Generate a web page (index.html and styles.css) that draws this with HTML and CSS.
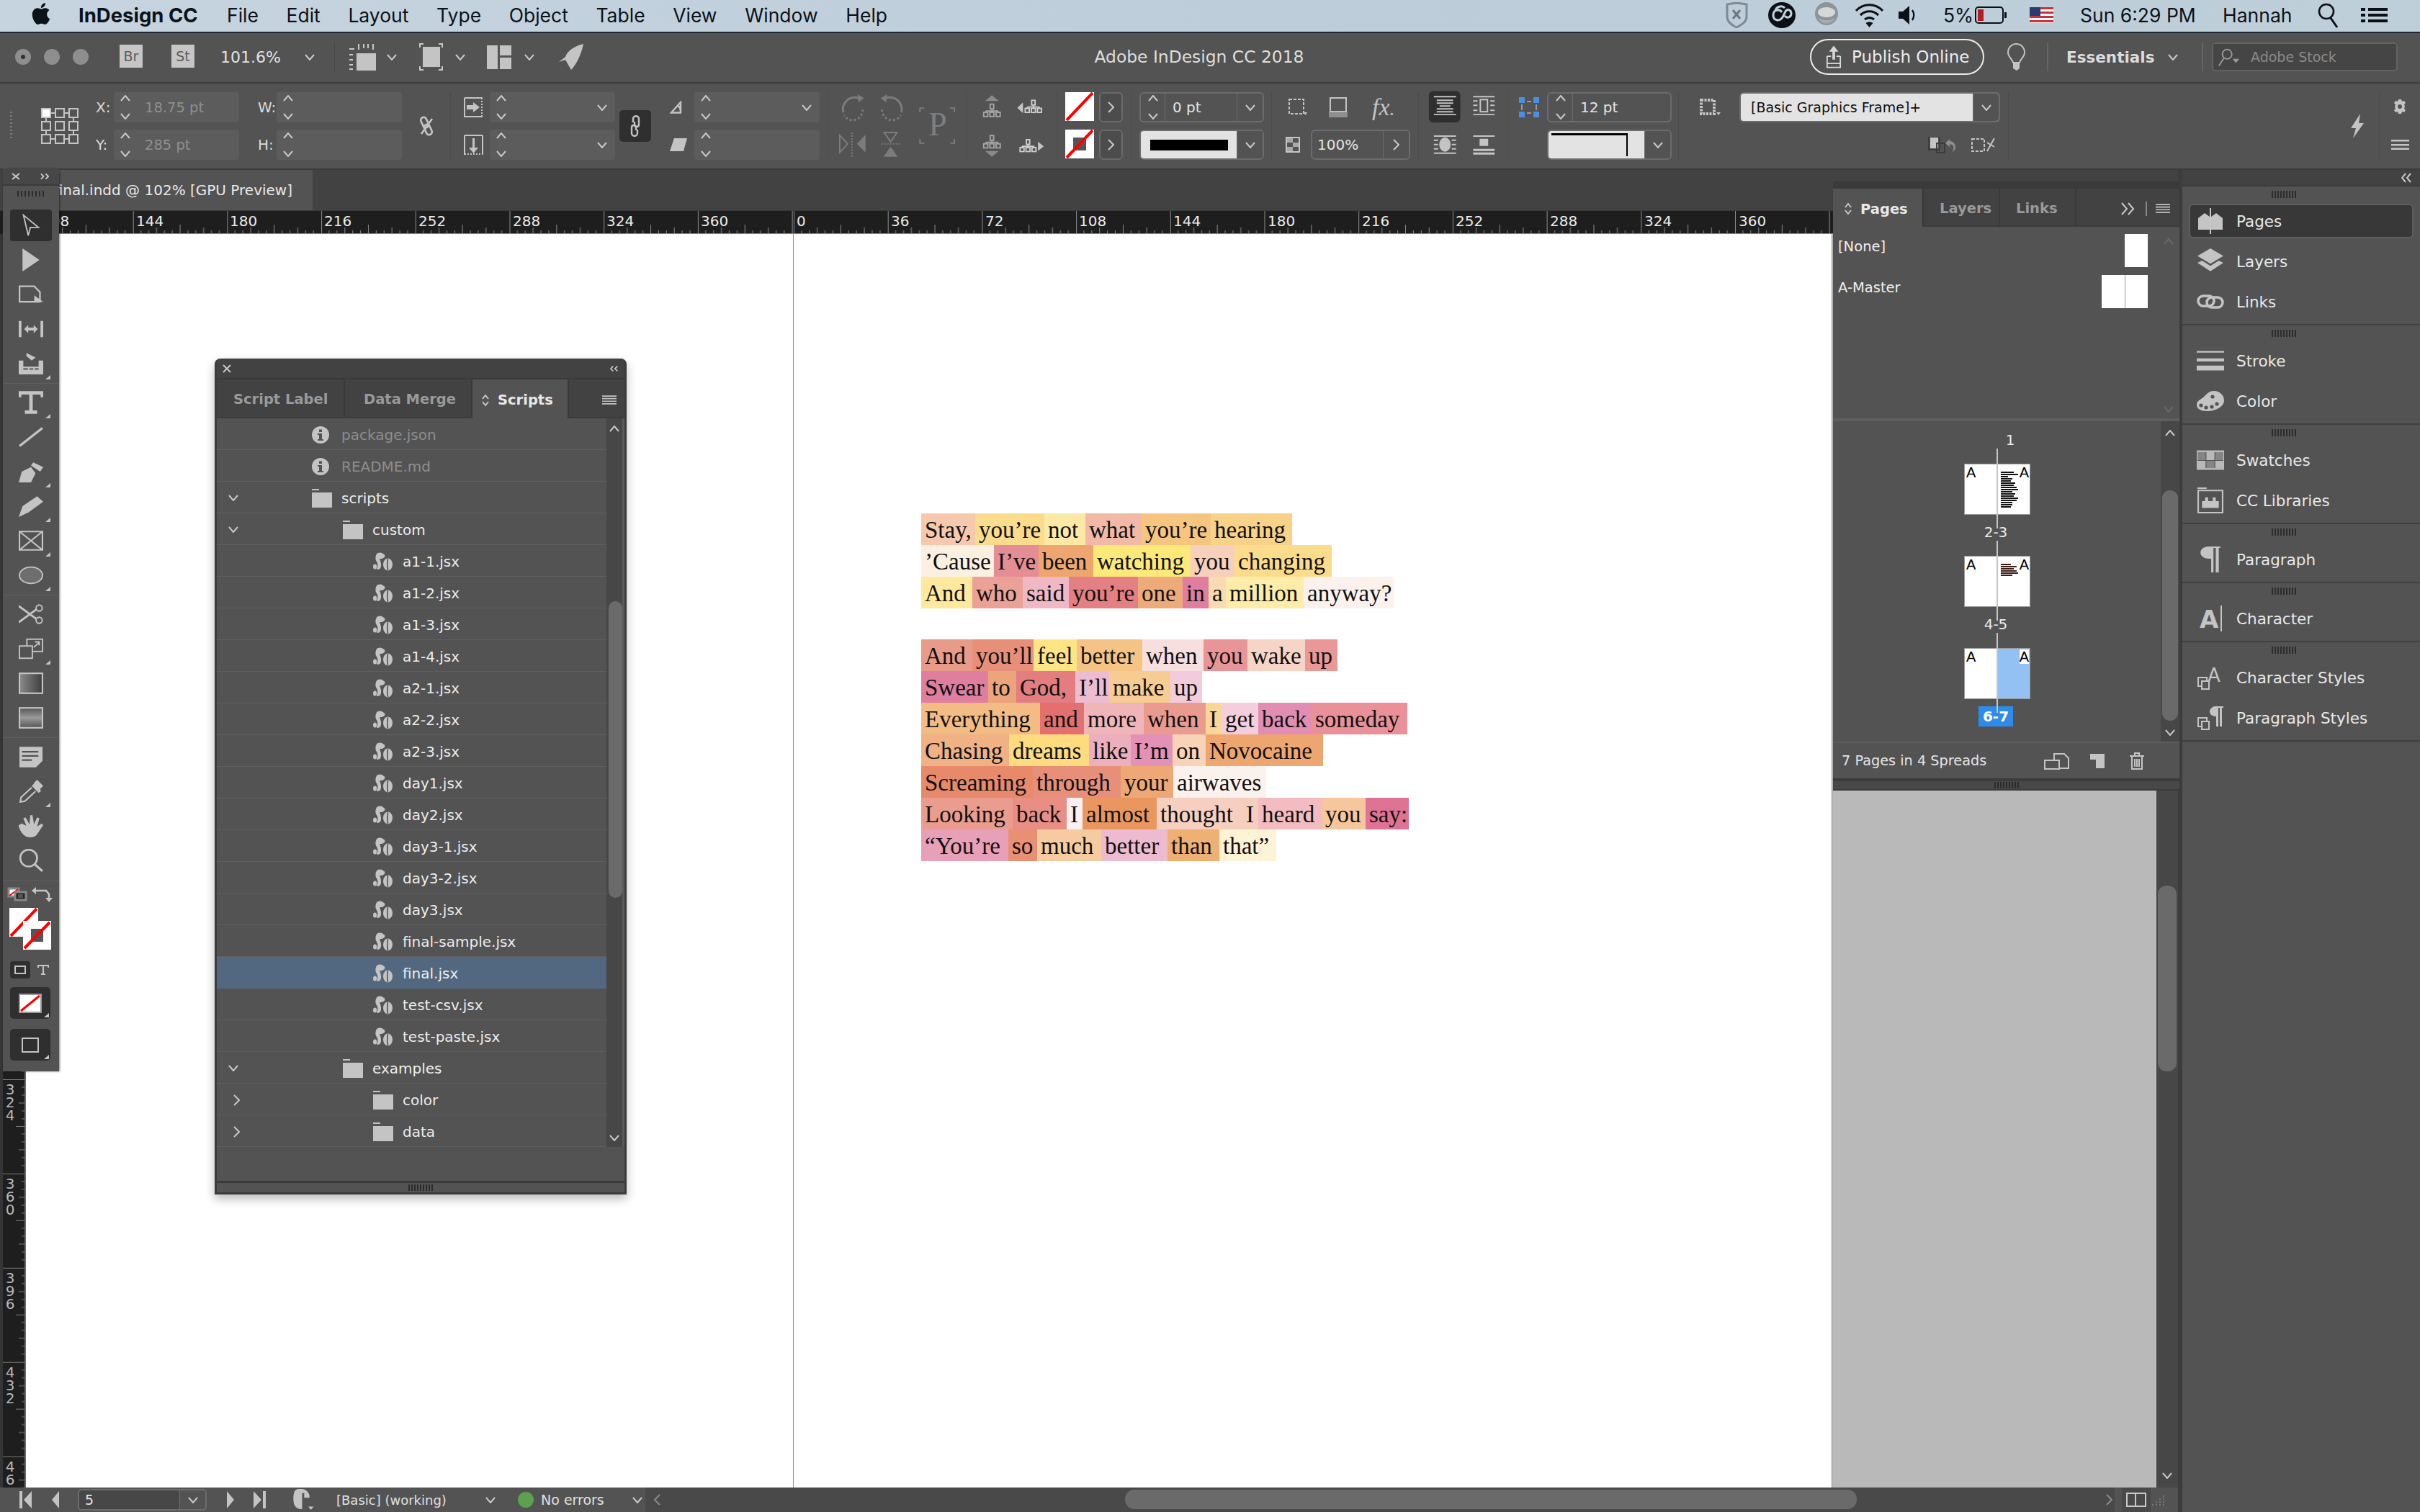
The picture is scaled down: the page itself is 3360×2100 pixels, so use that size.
FILE: index.html
```html
<!DOCTYPE html>
<html lang="en">
<head>
<meta charset="utf-8">
<title>Adobe InDesign CC 2018</title>
<link rel="stylesheet" href="styles.css">
</head>
<body>
<svg class="defs" aria-hidden="true">
  <defs>
    <symbol id="chev" viewBox="0 0 14 9"><polyline class="ln" points="1,1 7,8 13,1"/></symbol>
    <symbol id="chevr" viewBox="0 0 9 16"><polyline class="ln" points="1,1 8,8 1,15"/></symbol>
    <symbol id="spin" viewBox="0 0 14 34"><polyline class="ln" points="1,8 7,1 13,8"/><polyline class="ln" points="1,26 7,33 13,26"/></symbol>
    <symbol id="script" viewBox="0 0 28 26"><path class="ic" d="M6 1.500C9-.5 13 .5 14 2.500c3 .5 3 4 1 5-2 2-4 1-6 2 2 4 3 9 1 13-2 1-3 2-5 1 2-4 2-8-1-12-1-3-1-7 2-10.500z"/><ellipse class="ic" cx="2.600" cy="20" rx="2.600" ry="3.600"/><ellipse class="ic" cx="20.500" cy="17" rx="6.500" ry="8.500"/><path d="M20.500 9c-1 5-1 10 0 16" fill="none" stroke="#535353" stroke-width="1.600"/></symbol>
    <symbol id="folder" viewBox="0 0 28 26"><rect class="ic" x="0" y="0" width="10" height="2"/><rect class="ic" x="0" y="5" width="28" height="21"/></symbol>
    <symbol id="info" viewBox="0 0 24 24"><circle class="ic" cx="12" cy="12" r="12"/><rect class="cut" x="10" y="4.500" width="4" height="3.500"/><path class="cut" d="M8 10h6v8h2v2H8v-2h2v-6H8z"/></symbol>
    <symbol id="hamb" viewBox="0 0 24 15"><path class="ic" d="M0 0h24v2H0zM0 4.300h24v2H0zM0 8.600h24v2H0zM0 13h24v2H0z"/></symbol>
    <symbol id="nogo" viewBox="0 0 40 40"><rect fill="#fff" width="40" height="40"/><line x1="2" y1="39" x2="38" y2="1" stroke="#f00" stroke-width="4"/></symbol>
    <symbol id="tree" viewBox="0 0 28 20"><g fill="none" stroke="#a4a4a4" stroke-width="2"><rect x="11.500" y="1" width="5" height="7"/><path d="M14 8v3M5 11h18M5 11v2M14 11v2M23 11v2"/><rect x="2" y="13" width="6" height="6"/><rect x="11" y="13" width="6" height="6"/><rect x="20" y="13" width="6" height="6"/></g></symbol>
    <symbol id="treeb" viewBox="0 0 28 20"><g fill="none" stroke="#d0d0d0" stroke-width="2"><rect x="11.500" y="1" width="5" height="7"/><path d="M14 8v3M5 11h18M5 11v2M14 11v2M23 11v2"/><rect x="2" y="13" width="6" height="6"/><rect x="11" y="13" width="6" height="6"/><rect x="20" y="13" width="6" height="6"/></g></symbol>
  </defs>
</svg>

<header class="menubar">
  <svg class="apple" viewBox="0 0 24 24"><path d="M12.152 6.896c-.948 0-2.415-1.078-3.96-1.04-2.04.027-3.91 1.183-4.961 3.014-2.117 3.675-.546 9.103 1.519 12.09 1.013 1.454 2.208 3.09 3.792 3.039 1.52-.065 2.09-.987 3.935-.987 1.831 0 2.35.987 3.96.948 1.637-.026 2.676-1.48 3.676-2.948 1.156-1.688 1.636-3.325 1.662-3.415-.039-.013-3.182-1.221-3.22-4.857-.026-3.04 2.48-4.494 2.597-4.559-1.429-2.09-3.623-2.324-4.39-2.376-2-.156-3.675 1.09-4.61 1.09zM15.53 3.83c.843-1.012 1.4-2.427 1.245-3.83-1.207.052-2.662.805-3.532 1.818-.78.896-1.454 2.338-1.273 3.714 1.338.104 2.715-.688 3.559-1.701"/></svg>
  <strong class="app-name">InDesign CC</strong>
  <nav class="menus"><span>File</span><span>Edit</span><span>Layout</span><span>Type</span><span>Object</span><span>Table</span><span>View</span><span>Window</span><span>Help</span></nav>
  <div class="status">
    <svg class="s-shield" viewBox="0 0 31 36"><path d="M2 3l13-2 14 2v17c0 7-6 11-14 15C7 31 2 27 2 20z" fill="none" stroke="#7f8a94" stroke-width="3"/><path d="M10 11l10 12M20 11L10 23" stroke="#6d7780" stroke-width="3"/></svg>
    <svg class="s-cc" viewBox="0 0 38 36"><ellipse cx="19" cy="18" rx="19" ry="18" fill="#0c1016"/><path d="M19 14c-3-5-12-4-12 4s9 9 13 3l4-8c2-4 8-3 8 3 0 5-6 7-9 3" fill="none" stroke="#c0d0dc" stroke-width="3"/><path d="M10 12c1-6 9-8 13-4" fill="none" stroke="#c0d0dc" stroke-width="3"/></svg>
    <svg class="s-helmet" viewBox="0 0 37 36"><ellipse cx="18" cy="16" rx="16" ry="16" fill="#8e9498"/><ellipse cx="18" cy="14" rx="12" ry="7" fill="#d4d8da"/><path d="M7 22c4 10 18 10 23 0-6 4-16 4-23 0z" fill="#a8acae"/></svg>
    <svg class="s-wifi" viewBox="0 0 41 36"><path d="M2 12c10-11 27-11 37 0M8 18c7-7 18-7 25 0M14 24c4-3 9-3 13 0" fill="none" stroke="#0c1016" stroke-width="3.200"/><path d="M20.500 35l-5-6c3-2 7-2 10 0z" fill="#0c1016"/></svg>
    <svg class="s-speaker" viewBox="0 0 26 26"><path d="M0 8h6l9-8v26l-9-8H0z" fill="#0c1016"/><path d="M19 6c3 4 3 10 0 14" fill="none" stroke="#0c1016" stroke-width="2.400"/></svg>
    <span class="s-pct">5%</span>
    <svg class="s-batt" viewBox="0 0 45 24"><rect x="1" y="1" width="38" height="22" rx="4" fill="none" stroke="#0c1016" stroke-width="2"/><rect x="4" y="4" width="8" height="16" fill="#b41e1e"/><rect x="41" y="8" width="3" height="8" fill="#0c1016"/></svg>
    <svg class="s-flag" viewBox="0 0 33 22"><rect width="33" height="22" fill="#fff"/><path d="M0 0h33v3H0zM0 6h33v3H0zM0 12h33v3H0zM0 18h33v3H0z" fill="#c8333a"/><rect width="15" height="12" fill="#2c3a70"/></svg>
    <span class="s-clock">Sun 6:29 PM</span>
    <span class="s-user">Hannah</span>
    <svg class="s-search" viewBox="0 0 29 36"><circle cx="12" cy="13" r="10" fill="none" stroke="#0c1016" stroke-width="2.600"/><line x1="18" y1="22" x2="27" y2="35" stroke="#0c1016" stroke-width="3"/></svg>
    <svg class="s-list" viewBox="0 0 37 20"><path d="M0 0h6v4H0zM10 0h27v4H10zM0 8h6v4H0zM10 8h27v4H10zM0 16h6v4H0zM10 16h27v4H10z" fill="#0c1016"/></svg>
  </div>
</header>

<section class="titlebar">
  <div class="lights"><i class="light on"></i><i class="light"></i><i class="light"></i></div>
  <span class="badge">Br</span>
  <span class="badge">St</span>
  <span class="zoom-val">101.6%</span>
  <svg class="chev z-chev"><use href="#chev"/></svg>
  <i class="tsep"></i>
  <svg class="t-view" viewBox="0 0 38 38"><path class="ic" d="M11 14h27v24H11z"/><path class="ln" d="M1 8h7M1 16h5M1 23h5M1 30h5M1 36h5M14 1v8M21 1v6M27 1v6M34 1v8"/></svg>
  <svg class="chev c1"><use href="#chev"/></svg>
  <svg class="t-screen" viewBox="0 0 33 38"><path class="ic" d="M5 5h24v28H5z"/><path class="ln" d="M1 6V1h5M27 1h5v5M1 32v5h5M27 37h5v-5"/></svg>
  <svg class="chev c2"><use href="#chev"/></svg>
  <svg class="t-arrange" viewBox="0 0 34 33"><path class="ic" d="M0 0h15v33H0zM18 0h16v14H18zM18 17h16v16H18z"/></svg>
  <svg class="chev c3"><use href="#chev"/></svg>
  <svg class="t-rocket" viewBox="0 0 36 36"><path class="ic" d="M34 0C22 3 12 9 9 18l-9 7 9-3 8 14c6-6 14-20 17-36z"/></svg>
  <span class="app-title">Adobe InDesign CC 2018</span>
  <div class="title-right">
    <button class="publish"><svg viewBox="0 0 24 34"><path d="M12 0l7 9h-5v12h-4V9H5z" fill="#d8d8d8"/><path d="M2 16h6M16 16h6M2 16v17h20V16M2 27h20" fill="none" stroke="#d8d8d8" stroke-width="2"/></svg>Publish Online</button>
    <svg class="bulb" viewBox="0 0 25 38"><path d="M12.500 1C6 1 1 6 1 13c0 6 6 9 7 14h9c1-5 7-8 7-14 0-7-5-12-11.500-12z" fill="none" stroke="#c4c4c4" stroke-width="2"/><path class="ic" d="M8 27h9v8l-4 3-5-3z"/></svg>
    <i class="tsep b"></i>
    <strong class="workspace-name">Essentials</strong>
    <svg class="chev w-chev"><use href="#chev"/></svg>
    <i class="tsep c"></i>
    <div class="stock"><svg viewBox="0 0 34 26"><circle cx="14" cy="9" r="7" fill="none" stroke="#9a9a9a" stroke-width="2"/><path d="M9 15L2 26" stroke="#9a9a9a" stroke-width="2"/><path d="M22 16h10l-5 6z" fill="#9a9a9a"/></svg><span>Adobe Stock</span></div>
  </div>
</section>

<section class="controlbar">
  <div class="group g-ref">
    <i class="vgrip"></i>
    <svg class="refpoint" viewBox="0 0 52 50"><g fill="none" stroke="#c4c4c4" stroke-width="2"><rect x="1" y="1" width="12" height="12" fill="#fff"/><rect x="20" y="1" width="12" height="12"/><rect x="39" y="1" width="12" height="12"/><rect x="1" y="19" width="12" height="12"/><rect x="20" y="19" width="12" height="12"/><rect x="39" y="19" width="12" height="12"/><rect x="1" y="37" width="12" height="12"/><rect x="20" y="37" width="12" height="12"/><rect x="39" y="37" width="12" height="12"/><path d="M13 7h7M32 7h7M7 13v6M45 13v6M7 31v6M45 31v6M13 43h7M32 43h7"/></g></svg>
  </div>
  <div class="group g-xy">
    <label class="lab">X:</label>
    <div class="cf"><svg class="spin"><use href="#spin"/></svg><span class="dim">18.75 pt</span></div>
    <label class="lab w">W:</label>
    <div class="cf"><svg class="spin"><use href="#spin"/></svg></div>
    <label class="lab">Y:</label>
    <div class="cf"><svg class="spin"><use href="#spin"/></svg><span class="dim">285 pt</span></div>
    <label class="lab w">H:</label>
    <div class="cf"><svg class="spin"><use href="#spin"/></svg></div>
  </div>
  <div class="group g-link">
    <svg viewBox="0 0 26 28"><g fill="none" stroke="#c4c4c4" stroke-width="2.600"><g transform="rotate(-25 13 14)"><rect x="9" y="1" width="8" height="15" rx="4"/><rect x="9" y="12" width="8" height="15" rx="4"/></g><path d="M21 4L6 25"/></g></svg>
  </div>
  <div class="group g-skew">
    <svg class="mini box" viewBox="0 0 27 28"><path d="M1 1h25M1 1v27M1 27h25" fill="none" stroke="#c4c4c4" stroke-width="2"/><path d="M25 1v27" stroke="#c4c4c4" stroke-width="2" stroke-dasharray="2 2"/><path class="ic" d="M4 11h9V7l9 7-9 7v-4H4z"/></svg>
    <div class="cf"><svg class="spin"><use href="#spin"/></svg><svg class="chev push"><use href="#chev"/></svg></div>
    <div class="chain"><svg viewBox="0 0 14 30"><g fill="none" stroke="#c4c4c4" stroke-width="2.400"><path d="M4 10V5c0-5 8-5 8 0v8c0 4-6 4-6 0v-4"/><path d="M10 20v5c0 5-8 5-8 0v-8c0-4 6-4 6 0v4"/></g></svg></div>
    <svg class="mini small r1" viewBox="0 0 24 18"><path d="M2 16.500L15 2v14.500zM11 7c3 1 4 5 4 9" fill="none" stroke="#c4c4c4" stroke-width="2.400"/></svg>
    <div class="cf c5"><svg class="spin"><use href="#spin"/></svg><svg class="chev push"><use href="#chev"/></svg></div>
    <svg class="mini box r2" viewBox="0 0 27 28"><path d="M1 1h25M1 1v27M26 1v27" fill="none" stroke="#c4c4c4" stroke-width="2"/><path d="M1 27h25" stroke="#c4c4c4" stroke-width="2" stroke-dasharray="2 2"/><path class="ic" d="M12 5h3v13h5l-6.500 8L7 18h5z"/></svg>
    <div class="cf c7"><svg class="spin"><use href="#spin"/></svg><svg class="chev push"><use href="#chev"/></svg></div>
    <svg class="mini small r3" viewBox="0 0 24 18"><path class="ic" d="M6 0h18l-5 18H0z"/></svg>
    <div class="cf c9"><svg class="spin"><use href="#spin"/></svg></div>
  </div>
  <div class="group g-rot">
    <svg class="full" viewBox="0 0 193 94">
      <g fill="none" stroke="#7c7c7c" stroke-width="3"><path d="M48 24a14 14 0 0 1-26 8" stroke-dasharray="3 3"/><path d="M21 28c-3-13 8-24 22-20"/><path d="M75 24a14 14 0 0 0 26 8" stroke-dasharray="3 3"/><path d="M102 28c3-13-8-24-22-20"/></g>
      <path fill="#7c7c7c" d="M41 3l9 5-8 6zM82 3l-9 5 8 6z"/>
      <path d="M16 60v24l11-12z" fill="none" stroke="#7c7c7c" stroke-width="2"/>
      <path d="M52 59v25L40 72z" fill="#7c7c7c"/>
      <path d="M33 56v34M74 72h26" stroke="#7c7c7c" stroke-width="2" stroke-dasharray="2 2"/>
      <path d="M78 56h18l-9 13z" fill="none" stroke="#7c7c7c" stroke-width="2"/>
      <path d="M77 90h20l-10-14z" fill="#7c7c7c"/>
      <path d="M128 28v-6h6M170 22h6v6M128 65v6h6M170 71h6v-6" fill="none" stroke="#7c7c7c" stroke-width="2"/>
      <text x="140" y="60" class="p-glyph">P</text>
    </svg>
  </div>
  <div class="group g-sel">
    <svg class="full" viewBox="0 0 125 94">
      <path fill="#8a8a8a" d="M25 12h19l-9.500-8zM25 82h19l-9.500 8z"/>
      <use href="#tree" x="21" y="15" width="27" height="20"/>
      <use href="#tree" x="21" y="59" width="27" height="20"/>
      <use href="#treeb" x="78" y="10" width="29" height="19"/>
      <use href="#treeb" x="72" y="65" width="26" height="19"/>
      <path class="ic" d="M78 14v15l-8-7.500zM99 69v13l8-6.500z"/>
    </svg>
  </div>
  <div class="group g-swatch">
    <svg class="sw"><use href="#nogo"/></svg>
    <div class="arrow-btn"><svg><use href="#chevr"/></svg></div>
    <svg class="sw" viewBox="0 0 40 40"><rect fill="#fff" width="40" height="40"/><rect x="11" y="11" width="18" height="18" fill="#555"/><line x1="2" y1="39" x2="38" y2="1" stroke="#f00" stroke-width="4"/></svg>
    <div class="arrow-btn"><svg><use href="#chevr"/></svg></div>
  </div>
  <div class="group g-stroke">
    <div class="bf"><div class="spin-col"><svg class="spin"><use href="#spin"/></svg></div><span class="val">0 pt</span><div class="dd"><svg class="chev"><use href="#chev"/></svg></div></div>
    <div class="bf"><div class="line-sw"><i></i></div><div class="dd"><svg class="chev"><use href="#chev"/></svg></div></div>
  </div>
  <div class="group g-fx">
    <div class="fx-row">
      <svg class="fx-frame" viewBox="0 0 27 24"><path d="M2 1h20v20H2z" fill="none" stroke="#c4c4c4" stroke-width="2" stroke-dasharray="4 2"/><path class="ic" d="M22 19h5l-2.500 4z"/></svg>
      <svg class="fx-shadow" viewBox="0 0 26 28"><rect x="2" y="1" width="22" height="19" fill="#555" stroke="#c4c4c4" stroke-width="2"/><rect x="0" y="20" width="26" height="8" fill="#a8a8a8" opacity=".7"/></svg>
      <span class="fx-text">fx<small>.</small></span>
    </div>
    <div class="op-row">
      <svg class="op-ic" viewBox="0 0 20 22"><rect x="1" y="1" width="18" height="20" fill="none" stroke="#c4c4c4" stroke-width="2"/><path fill="#a8a8a8" d="M2 2h8v6H2zM10 8h8v6h-8zM2 14h8v6H2z"/></svg>
      <div class="bf op"><span class="val">100%</span><div class="dd"><svg class="chevr-s"><use href="#chevr"/></svg></div></div>
    </div>
  </div>
  <div class="group g-wrap">
    <svg class="full" viewBox="0 0 124 94">
      <rect x="14" y="-2" width="44" height="44" rx="6" fill="#2f2f2f"/>
      <path class="ic" d="M21 5h31v2H21zM21 30h31v2H21zM25 10h23v2H25zM25 14h23v2H25zM29 18h15v2H29zM25 22h23v2H25zM25 26h23v2H25z"/>
      <path class="ic" d="M76 5h30v2H76zM76 30h30v2H76zM76 11h6v2h-6zM100 11h6v2h-6zM76 17h6v2h-6zM100 17h6v2h-6zM76 24h6v2h-6zM100 24h6v2h-6z"/>
      <rect x="86" y="10" width="10" height="17" fill="none" stroke="#c4c4c4" stroke-width="2"/>
      <path class="ic" d="M21 60h31v2H21zM21 66h6v2h-6zM46 66h6v2h-6zM21 72h6v2h-6zM46 72h6v2h-6zM21 78h6v2h-6zM46 78h6v2h-6zM21 84h31v2H21z"/>
      <ellipse class="ic" cx="36.500" cy="73" rx="8" ry="10"/>
      <path class="ic" d="M76 60h30v2H76zM85 65h12v10H85zM76 79h30v3H76zM76 84h30v3H76z"/>
    </svg>
  </div>
  <div class="group g-gap">
    <svg class="gap-ic" viewBox="0 0 28 28"><g fill="#4a90e2"><rect width="8" height="8"/><rect x="20" width="8" height="8"/><rect y="20" width="8" height="8"/><rect x="20" y="20" width="8" height="8"/></g><path d="M4 10v8M24 10v8M11 6h6M11 22h6" fill="none" stroke="#9a9a9a" stroke-width="2"/></svg>
    <div class="bf"><div class="spin-col"><svg class="spin"><use href="#spin"/></svg></div><span class="val">12 pt</span></div>
    <i></i>
    <div class="bf"><div class="corner-sw"><i></i></div><div class="dd"><svg class="chev"><use href="#chev"/></svg></div></div>
  </div>
  <div class="group g-style">
    <svg class="mini" viewBox="0 0 30 24"><rect x="2" y="2" width="18" height="19" fill="none" stroke="#c4c4c4" stroke-width="4" stroke-dasharray="3 1.500"/><path class="ic" d="M23 19h6l-3 4z"/></svg>
    <div class="bf style-field"><span>[Basic Graphics Frame]+</span><div class="dd"><svg class="chev"><use href="#chev"/></svg></div></div>
    <i></i>
    <div class="style-mini">
      <svg viewBox="0 0 40 23"><rect x="3" y="1" width="11" height="15" fill="#c4c4c4"/><rect x="1" y="0" width="15" height="18" fill="none" stroke="#3c3c3c" stroke-width="2"/><rect x="12" y="9" width="11" height="13" fill="none" stroke="#3c3c3c" stroke-width="2"/><path d="M30 3v3c5 0 8 4 8 8s-2 6-5 7c2-2 3-5 2-8-1-2-3-3-5-2v3l-6-5z" fill="#8e8e8e"/></svg>
      <svg viewBox="0 0 34 20"><rect x="1" y="2" width="17" height="17" fill="none" stroke="#c4c4c4" stroke-width="2" stroke-dasharray="4 2"/><path d="M22 19L32 1M22 7l10 6" stroke="#c4c4c4" stroke-width="2"/></svg>
    </div>
  </div>
  <svg class="bolt" viewBox="0 0 20 34"><path class="ic" d="M14 0L1 20h7L4 34l15-21h-7z"/></svg>
  <div class="group g-end">
    <svg class="gear" viewBox="0 0 20 20"><path class="ic" d="M8 0h4l1 3 3-1 2 3-2 2 1 3-1 3 2 2-2 3-3-1-1 3H8l-1-3-3 1-2-3 2-2-1-3 1-3-2-2 2-3 3 1z"/><circle class="cut" cx="10" cy="10" r="3"/></svg>
    <svg class="endmenu" viewBox="0 0 25 14"><path class="ic" d="M0 0h25v2.500H0zM0 6h25v2.500H0zM0 11.500h25V14H0z"/></svg>
  </div>
</section>

<main class="workspace">
  <section class="doc">
    <div class="tabbar"><div class="doc-tab">final.indd @ 102% [GPU Preview]</div></div>
    <svg class="hruler" viewBox="0 0 3024 32" width="3024" height="32">
      <defs>
        <pattern id="tl" patternUnits="userSpaceOnUse" x="54" y="0" width="130.700" height="32"><path d="M.5 0v32M65.350 19v12M32.700 23v8M98 23v8M10.900 27v4M21.800 27v4M43.600 27v4M54.500 27v4M76.200 27v4M87.100 27v4M108.900 27v4M119.800 27v4" stroke="#8c8c8c" fill="none"/></pattern>
        <pattern id="tr" patternUnits="userSpaceOnUse" x="1102" y="0" width="130.700" height="32"><path d="M.5 0v32M65.350 19v12M32.700 23v8M98 23v8M10.900 27v4M21.800 27v4M43.600 27v4M54.500 27v4M76.200 27v4M87.100 27v4M108.900 27v4M119.800 27v4" stroke="#8c8c8c" fill="none"/></pattern>
      </defs>
      <rect x="36" width="1066" height="32" fill="url(#tl)"/>
      <rect x="1102" width="1500" height="32" fill="url(#tr)"/>
      <rect x="36" y="31" width="2566" height="1" fill="#8a8a8a"/>
      <g class="rtext">
        <text x="58" y="21">108</text><text x="189" y="21">144</text><text x="319" y="21">180</text><text x="450" y="21">216</text><text x="581" y="21">252</text><text x="712" y="21">288</text><text x="842" y="21">324</text><text x="973" y="21">360</text>
        <text x="1106" y="21">0</text><text x="1237" y="21">36</text><text x="1368" y="21">72</text><text x="1498" y="21">108</text><text x="1629" y="21">144</text><text x="1760" y="21">180</text><text x="1891" y="21">216</text><text x="2021" y="21">252</text><text x="2152" y="21">288</text><text x="2283" y="21">324</text><text x="2414" y="21">360</text>
      </g>
    </svg>
    <div class="stage">
      <svg class="vruler" viewBox="0 325 36 1741" width="36" height="1741">
        <defs><pattern id="tv" patternUnits="userSpaceOnUse" x="0" y="1499" width="36" height="130.900"><path d="M4 .5h30M22 65.500h12M26 33h8M26 98h8M30 11h4M30 22h4M30 44h4M30 55h4M30 76h4M30 87h4M30 109h4M30 120h4" stroke="#7c7c7c" fill="none"/></pattern></defs>
        <rect x="0" y="1488" width="36" height="578" fill="url(#tv)"/>
        <rect x="0" y="325" width="4" height="1741" fill="#353535"/>
        <rect x="34" y="325" width="2" height="1741" fill="#6a6a6a"/>
        <g class="rtext vt" text-anchor="middle">
          <text x="14" y="1520">3</text><text x="14" y="1538">2</text><text x="14" y="1556">4</text>
          <text x="14" y="1651">3</text><text x="14" y="1669">6</text><text x="14" y="1687">0</text>
          <text x="14" y="1782">3</text><text x="14" y="1800">9</text><text x="14" y="1818">6</text>
          <text x="14" y="1913">4</text><text x="14" y="1931">3</text><text x="14" y="1949">2</text>
          <text x="14" y="2044">4</text><text x="14" y="2062">6</text>
        </g>
      </svg>
      <div class="page-left"></div>
      <div class="page-right">
        <article class="lyrics">
          <div class="stanza">
            <p class="line"><span style="width:75px;background:#f6c9ae">Stay,</span><span style="width:96px;background:#fbdc8c">you’re</span><span style="width:57px;background:#fde9a6">not</span><span style="width:78px;background:#f1b9a6">what</span><span style="width:96px;background:#f6c680">you’re</span><span style="width:113px;background:#f8d289">hearing</span></p>
            <p class="line"><span style="width:101px;background:#fcf0e0">’Cause</span><span style="width:62px;background:#e58d94">I’ve</span><span style="width:76px;background:#eea671">been</span><span style="width:135px;background:#fde87a">watching</span><span style="width:61px;background:#f6cfbd">you</span><span style="width:135px;background:#fbdc8c">changing</span></p>
            <p class="line"><span style="width:71px;background:#fee99f">And</span><span style="width:70px;background:#eba195">who</span><span style="width:64px;background:#f0b7c4">said</span><span style="width:96px;background:#e47f83">you’re</span><span style="width:62px;background:#eeab7a">one</span><span style="width:36px;background:#df7e9f">in</span><span style="width:24px;background:#fadab0">a</span><span style="width:108px;background:#feeca9">million</span><span style="width:125px;background:#fbf2ee">anyway?</span></p>
          </div>
          <div class="stanza">
            <p class="line"><span style="width:71px;background:#e99b8a">And</span><span style="width:85px;background:#e78f78">you’ll</span><span style="width:60px;background:#fde586">feel</span><span style="width:91px;background:#f5c484">better</span><span style="width:85px;background:#f7dfe0">when</span><span style="width:61px;background:#e99497">you</span><span style="width:80px;background:#f6d5c6">wake</span><span style="width:45px;background:#e99797">up</span></p>
            <p class="line"><span style="width:93px;background:#df7e9f">Swear</span><span style="width:39px;background:#eba47b">to</span><span style="width:82px;background:#e37d7f">God,</span><span style="width:47px;background:#eebcd2">I’ll</span><span style="width:85px;background:#f7cc92">make</span><span style="width:44px;background:#f2ccdc">up</span></p>
            <p class="line"><span style="width:165px;background:#f3bc85">Everything</span><span style="width:61px;background:#e36f6f">and</span><span style="width:83px;background:#f0b5b8">more</span><span style="width:86px;background:#ea9b90">when</span><span style="width:22px;background:#fad796">I</span><span style="width:51px;background:#f4cedc">get</span><span style="width:74px;background:#e28eb3">back</span><span style="width:133px;background:#e99099">someday</span></p>
            <p class="line"><span style="width:122px;background:#f0b185">Chasing</span><span style="width:111px;background:#fddb7e">dreams</span><span style="width:58px;background:#ecafbd">like</span><span style="width:58px;background:#e391b7">I’m</span><span style="width:46px;background:#f8d3b7">on</span><span style="width:163px;background:#eea671">Novocaine</span></p>
            <p class="line"><span style="width:155px;background:#e78a6c">Screaming</span><span style="width:122px;background:#e78f78">through</span><span style="width:73px;background:#eea876">your</span><span style="width:129px;background:#fbf2ee">airwaves</span></p>
            <p class="line"><span style="width:127px;background:#ea9c8e">Looking</span><span style="width:75px;background:#e88e84">back</span><span style="width:22px;background:#fbf0f1">I</span><span style="width:103px;background:#e9975f">almost</span><span style="width:119px;background:#f6cfc1">thought</span><span style="width:22px;background:#f5cfbd">I</span><span style="width:88px;background:#f2bcc0">heard</span><span style="width:61px;background:#f6c79d">you</span><span style="width:60px;background:#df7394">say:</span></p>
            <p class="line"><span style="width:121px;background:#e8a0b8">“You’re</span><span style="width:40px;background:#e98f74">so</span><span style="width:89px;background:#f6cba0">much</span><span style="width:92px;background:#edbbcf">better</span><span style="width:72px;background:#efb074">than</span><span style="width:79px;background:#fef4d5">that”</span></p>
          </div>
        </article>
      </div>
      <div class="pasteboard"></div>
      <div class="vscroll"><i class="vthumb"></i><svg class="chev vs-chev"><use href="#chev"/></svg></div>
    </div>
    <footer class="statusbar">
      <svg class="sb-first" viewBox="0 0 17 24"><path class="ic" d="M0 0h4v24H0zM17 0v24L6 12z"/></svg>
      <svg class="sb-prev" viewBox="0 0 10 24"><path class="ic" d="M10 0v24L0 12z"/></svg>
      <div class="sb-field"><span>5</span><div class="dd"><svg class="chev"><use href="#chev"/></svg></div></div>
      <svg class="sb-next" viewBox="0 0 10 24"><path class="ic" d="M0 0v24l10-12z"/></svg>
      <svg class="sb-last" viewBox="0 0 17 24"><path class="ic" d="M0 0v24l11-12zM13 0h4v24h-4z"/></svg>
      <svg class="sb-prof" viewBox="0 0 34 32"><path class="ic" d="M12 0h6a12 12 0 0 1 10 13h-8V6h-3v24c-9 0-13-5-13-15S6 0 12 0z"/><path class="ic" d="M26 26h8l-4 5z"/></svg>
      <span class="sb-text prof">[Basic] (working)</span>
      <svg class="chev sb-c1"><use href="#chev"/></svg>
      <i class="ok-dot"></i>
      <span class="sb-text err">No errors</span>
      <svg class="chev sb-c2"><use href="#chev"/></svg>
      <div class="hscroll">
        <svg class="hs-left" viewBox="0 0 9 16"><polyline class="ln dimln" points="8,1 1,8 8,15"/></svg>
        <i class="hthumb"></i>
        <svg class="hs-right" viewBox="0 0 9 16"><polyline class="ln dimln" points="1,1 8,8 1,15"/></svg>
      </div>
      <div class="spread-btn"><i></i><i></i></div>
      <svg class="resize" viewBox="0 0 20 16"><path d="M0 15h2M5 15h2M10 15h2M15 15h2M5 11h2M10 11h2M15 11h2M10 7h2M15 7h2M15 3h2" stroke="#777" stroke-width="2"/></svg>
    </footer>
  </section>

  <aside class="dock">
    <div class="dock-head"><svg viewBox="0 0 14 14"><path class="ln" d="M6 1L1 7l5 6M13 1L8 7l5 6"/></svg></div>
    <div class="dock-group first">
      <i class="grip"></i>
      <div class="dock-item active"><svg viewBox="0 0 36 36"><path class="ic" d="M1 14l9-7 7 5v18H1zM35 14l-9-7-7 5v18h16z"/><path class="ln" d="M18 0v36"/></svg>Pages</div>
      <div class="dock-item"><svg viewBox="0 0 36 34"><path class="ic" d="M18 0l17 10-17 10L1 10z"/><path class="ic" d="M1 19l6-3 11 7 11-7 6 3-17 11z"/></svg>Layers</div>
      <div class="dock-item"><svg viewBox="0 0 38 20"><g fill="none" stroke="#c4c4c4" stroke-width="3.500"><rect x="2" y="2" width="22" height="14" rx="7"/><rect x="14" y="4" width="22" height="14" rx="7"/></g></svg>Links</div>
    </div>
    <div class="dock-group">
      <i class="grip"></i>
      <div class="dock-item"><svg viewBox="0 0 34 24"><path class="ic" d="M0 0h34v2H0zM0 9h34v4H0zM0 18h34v6H0z"/></svg>Stroke</div>
      <div class="dock-item"><svg viewBox="0 0 38 28"><path class="ic" d="M24 0c8 0 14 6 14 13 0 9-12 15-24 15C6 28 0 25 0 19c0-5 5-7 9-10 4-4 8-9 15-9z"/><circle class="cut" cx="6" cy="20" r="2.600"/><circle class="cut" cx="13" cy="23" r="2.600"/><circle class="cut" cx="21" cy="22" r="2.600"/><circle class="cut" cx="28" cy="18" r="2.600"/><circle class="cut" cx="22" cy="8" r="2.600"/></svg>Color</div>
    </div>
    <div class="dock-group">
      <i class="grip"></i>
      <div class="dock-item"><svg viewBox="0 0 34 22"><rect width="34" height="22" fill="none" stroke="#c4c4c4" stroke-width="2"/><path class="ic" d="M1 1h10v10H1zM23 1h10v10H23zM12 12h10v9H12z" opacity=".45"/><path class="ic" d="M12 1h10v10H12zM1 12h10v9H1zM23 12h10v9H23z" opacity=".9"/></svg>Swatches</div>
      <div class="dock-item"><svg viewBox="0 0 34 34"><path d="M1 4h32v29H1z" fill="none" stroke="#c4c4c4" stroke-width="2"/><path d="M0 1h12" stroke="#c4c4c4" stroke-width="2"/><path class="ic" d="M6 27V18h4v-5h4v5h6v-5h4v5h4v9z"/></svg>CC Libraries</div>
    </div>
    <div class="dock-group">
      <i class="grip"></i>
      <div class="dock-item"><svg viewBox="0 0 26 34"><path class="ic" d="M12 0h14v2h-2v32h-4V2h-3v32h-3V16h-2C5 16 0 13 0 8s5-8 12-8z"/></svg>Paragraph</div>
    </div>
    <div class="dock-group">
      <i class="grip"></i>
      <div class="dock-item"><svg class="tall" viewBox="0 -6 38 48"><text x="4" y="31" class="dock-a">A</text><rect class="ic" x="33" y="0" width="2" height="36"/></svg>Character</div>
    </div>
    <div class="dock-group">
      <i class="grip"></i>
      <div class="dock-item"><svg viewBox="0 0 36 36"><text x="14" y="24" class="dock-a sm">A</text><g fill="none" stroke="#c4c4c4" stroke-width="2"><rect x="1" y="18" width="12" height="12"/><rect x="6" y="23" width="10" height="11" fill="#535353"/></g></svg>Character Styles</div>
      <div class="dock-item"><svg viewBox="0 0 36 36"><path class="ic" d="M24 2h12v2h-2v26h-3V4h-2v26h-3V16c-6 0-9-3-9-7s5-7 7-7z"/><g fill="none" stroke="#c4c4c4" stroke-width="2"><rect x="1" y="18" width="12" height="12"/><rect x="6" y="23" width="10" height="11" fill="#535353"/></g></svg>Paragraph Styles</div>
    </div>
  </aside>
</main>

<!-- floating tools panel -->
<aside class="tools">
  <div class="tools-head"><svg viewBox="0 0 12 10"><path class="ln" d="M1 1l10 8M11 1L1 9"/></svg><svg viewBox="0 0 13 10"><path class="ln" d="M1 1l4 4-4 4M8 1l4 4-4 4"/></svg></div>
  <i class="tools-grip"></i>
  <div class="tool-group first">
    <div class="tool active"><svg viewBox="0 0 26 34"><path d="M2 2l22 18H12l-3 12z" fill="none" stroke="#c4c4c4" stroke-width="2"/></svg></div>
    <div class="tool"><svg viewBox="0 0 26 30"><path class="ic" d="M2 0l22 15L2 30z"/></svg></div>
    <div class="tool"><svg viewBox="0 0 30 26"><path d="M1 3h18l7 7v12H1z" fill="none" stroke="#c4c4c4" stroke-width="2"/><path class="ic" d="M19 14l11 8H19z"/></svg></div>
    <div class="tool"><svg viewBox="0 0 36 24"><path class="ic" d="M0 0h4v24H0zM32 0h4v24h-4zM8 12l6-6v4h8V6l6 6-6 6v-4h-8v4z"/></svg></div>
    <div class="tool more"><svg viewBox="0 0 32 28"><path class="ic" d="M0 10h6v8h20v-8h6v18H0zM10 0l12 6-5 4-7-6z"/><path class="cut" d="M6 20h6v2H6zM14 20h5v2h-5zM21 20h5v2h-5z"/></svg></div>
  </div>
  <div class="tool-group">
    <div class="tool more"><svg viewBox="0 0 28 26"><path class="ic" d="M0 0h28v7h-3V4H16v18h5v4H7v-4h5V4H3v3H0z"/></svg></div>
    <div class="tool"><svg viewBox="0 0 30 24"><path d="M1 23L29 1" stroke="#c4c4c4" stroke-width="3"/></svg></div>
    <div class="tool more"><svg viewBox="0 0 32 28"><path class="ic" d="M0 28l4-14 12-6 6 8-6 12zM19 2l13 6-4 6-12-8z"/></svg></div>
    <div class="tool more"><svg viewBox="0 0 32 28"><path class="ic" d="M0 28l5-14L24 1l8 7-19 14z"/></svg></div>
    <div class="tool more"><svg viewBox="0 0 32 26"><path d="M1 1h30v24H1zM1 1l30 24M31 1L1 25" fill="none" stroke="#c4c4c4" stroke-width="2"/></svg></div>
    <div class="tool more"><svg viewBox="0 0 36 28"><ellipse cx="18" cy="14" rx="17" ry="12" fill="#6e6e6e" stroke="#c4c4c4" stroke-width="2"/></svg></div>
  </div>
  <div class="tool-group">
    <div class="tool"><svg viewBox="0 0 36 30"><path d="M0 3l26 19M0 27L26 8" stroke="#c4c4c4" stroke-width="3"/><circle cx="30" cy="6" r="4.500" fill="none" stroke="#c4c4c4" stroke-width="2"/><circle cx="30" cy="24" r="4.500" fill="none" stroke="#c4c4c4" stroke-width="2"/></svg></div>
    <div class="tool more"><svg viewBox="0 0 36 30"><rect x="12" y="1" width="23" height="18" fill="none" stroke="#c4c4c4" stroke-width="2"/><rect x="1" y="11" width="19" height="18" fill="#535353" stroke="#c4c4c4" stroke-width="2"/><path d="M22 13l8-7M24 5h6v5" fill="none" stroke="#c4c4c4" stroke-width="2"/></svg></div>
    <div class="tool"><svg viewBox="0 0 32 28"><defs><linearGradient id="gr1"><stop offset="0" stop-color="#8a8a8a"/><stop offset="1" stop-color="#3e3e3e"/></linearGradient></defs><rect x="1" y="1" width="30" height="26" fill="url(#gr1)" stroke="#c4c4c4" stroke-width="2"/></svg></div>
    <div class="tool"><svg viewBox="0 0 32 28"><defs><linearGradient id="gr2" x2="0" y2="1"><stop offset="0" stop-color="#555"/><stop offset=".5" stop-color="#9a9a9a"/><stop offset="1" stop-color="#555"/></linearGradient></defs><rect x="1" y="1" width="30" height="26" fill="url(#gr2)" stroke="#c4c4c4" stroke-width="2"/></svg></div>
  </div>
  <div class="tool-group">
    <div class="tool"><svg viewBox="0 0 28 28"><path class="ic" d="M0 2h28v17l-8 8H0z"/><path class="cut" d="M3 7h20v2H3zM3 12h20v2H3zM3 17h12v2H3z"/></svg></div>
    <div class="tool more"><svg viewBox="0 0 32 30"><path class="ic" d="M20 4l4-4 8 8-4 4 1 3-3 2-9-9 3-3z"/><path d="M17 10L3 23l-1 6 6-1 14-13" fill="none" stroke="#c4c4c4" stroke-width="2"/></svg></div>
    <div class="tool"><svg viewBox="0 0 32 30"><path class="ic" d="M0 14l4-2 6 3L6 5l3-1 5 9 1-12h3l2 12 4-9 3 1-3 11 6-4 2 2-8 12c-2 3-5 4-9 4-7 0-12-5-15-14z"/></svg></div>
    <div class="tool"><svg viewBox="0 0 32 30"><circle cx="13" cy="12" r="11" fill="none" stroke="#c4c4c4" stroke-width="2.500"/><path d="M21 20l10 9" stroke="#c4c4c4" stroke-width="3"/></svg></div>
  </div>
  <div class="swatch-block">
    <svg class="sw-svg" viewBox="0 0 77 112" width="77" height="112">
      <rect x="12" y="11" width="14" height="11" fill="#fff" stroke="#888" stroke-width="3"/><line x1="13" y1="21" x2="25" y2="12" stroke="#f00" stroke-width="2"/>
      <rect x="21" y="16" width="15" height="11" fill="#222" stroke="#888" stroke-width="3"/><rect x="25" y="19" width="7" height="5" fill="#555"/>
      <path d="M50 14h14l4 5v6" fill="none" stroke="#c4c4c4" stroke-width="2.500"/><path class="ic" d="M50 9v10l-6-5zM63 24h10l-5 6z"/>
      <svg x="13" y="38" width="40" height="40" viewBox="0 0 40 40"><use href="#nogo"/></svg>
      <rect x="32" y="56" width="39" height="40" fill="#fff"/><rect x="43" y="67" width="17" height="18" fill="#555"/><line x1="34" y1="94" x2="69" y2="58" stroke="#f00" stroke-width="4"/>
    </svg>
    <div class="fmt-row"><div class="fmt-btn"><i></i></div><svg viewBox="0 0 16 14"><path class="ic" d="M0 0h16v4h-2V2H9v10h2v2H5v-2h2V2H2v2H0z"/></svg></div>
    <div class="apply-btn"><svg viewBox="0 0 32 27"><rect x="1" y="1" width="30" height="25" fill="#fff" stroke="#999" stroke-width="2"/><line x1="3" y1="24" x2="29" y2="3" stroke="#f00" stroke-width="3"/></svg></div>
    <div class="apply-btn"><svg viewBox="0 0 32 27"><rect x="5" y="4" width="22" height="19" fill="none" stroke="#c4c4c4" stroke-width="2"/></svg></div>
  </div>
</aside>

<!-- floating scripts panel -->
<section class="scripts">
  <div class="panel-strip"><svg viewBox="0 0 12 12"><path class="ln" d="M1 1l10 10M11 1L1 11"/></svg><svg viewBox="0 0 14 10"><path class="ln" d="M5 1L1 5l4 4M12 1L8 5l4 4"/></svg></div>
  <div class="panel-tabs">
    <div class="ptab t1">Script Label</div>
    <div class="ptab t2">Data Merge</div>
    <div class="ptab t3 on"><svg viewBox="0 0 10 18"><path class="ln" d="M1 7l4-5 4 5M1 11l4 5 4-5"/></svg>Scripts</div>
    <svg class="phamb"><use href="#hamb"/></svg>
  </div>
  <div class="listwrap">
    <ul class="list">
      <li class="dimrow"><span class="twist"></span><svg class="ico inf"><use href="#info"/></svg>package.json</li>
      <li class="dimrow"><span class="twist"></span><svg class="ico inf"><use href="#info"/></svg>README.md</li>
      <li><span class="twist"><svg class="chev"><use href="#chev"/></svg></span><svg class="ico"><use href="#folder"/></svg>scripts</li>
      <li class="l2"><span class="twist"><svg class="chev"><use href="#chev"/></svg></span><svg class="ico"><use href="#folder"/></svg>custom</li>
      <li class="l3"><span class="twist"></span><svg class="ico"><use href="#script"/></svg>a1-1.jsx</li>
      <li class="l3"><span class="twist"></span><svg class="ico"><use href="#script"/></svg>a1-2.jsx</li>
      <li class="l3"><span class="twist"></span><svg class="ico"><use href="#script"/></svg>a1-3.jsx</li>
      <li class="l3"><span class="twist"></span><svg class="ico"><use href="#script"/></svg>a1-4.jsx</li>
      <li class="l3"><span class="twist"></span><svg class="ico"><use href="#script"/></svg>a2-1.jsx</li>
      <li class="l3"><span class="twist"></span><svg class="ico"><use href="#script"/></svg>a2-2.jsx</li>
      <li class="l3"><span class="twist"></span><svg class="ico"><use href="#script"/></svg>a2-3.jsx</li>
      <li class="l3"><span class="twist"></span><svg class="ico"><use href="#script"/></svg>day1.jsx</li>
      <li class="l3"><span class="twist"></span><svg class="ico"><use href="#script"/></svg>day2.jsx</li>
      <li class="l3"><span class="twist"></span><svg class="ico"><use href="#script"/></svg>day3-1.jsx</li>
      <li class="l3"><span class="twist"></span><svg class="ico"><use href="#script"/></svg>day3-2.jsx</li>
      <li class="l3"><span class="twist"></span><svg class="ico"><use href="#script"/></svg>day3.jsx</li>
      <li class="l3"><span class="twist"></span><svg class="ico"><use href="#script"/></svg>final-sample.jsx</li>
      <li class="l3 sel"><span class="twist"></span><svg class="ico"><use href="#script"/></svg>final.jsx</li>
      <li class="l3"><span class="twist"></span><svg class="ico"><use href="#script"/></svg>test-csv.jsx</li>
      <li class="l3"><span class="twist"></span><svg class="ico"><use href="#script"/></svg>test-paste.jsx</li>
      <li class="l2"><span class="twist"><svg class="chev"><use href="#chev"/></svg></span><svg class="ico"><use href="#folder"/></svg>examples</li>
      <li class="l3"><span class="twist"><svg class="chev-r"><use href="#chevr"/></svg></span><svg class="ico"><use href="#folder"/></svg>color</li>
      <li class="l3"><span class="twist"><svg class="chev-r"><use href="#chevr"/></svg></span><svg class="ico"><use href="#folder"/></svg>data</li>
    </ul>
    <div class="lscroll"><svg class="chev up"><use href="#chev"/></svg><i class="lthumb"></i><svg class="chev dn"><use href="#chev"/></svg></div>
  </div>
  <div class="panel-foot"><i class="grip"></i></div>
</section>

<!-- floating pages panel -->
<section class="pages">
  <div class="pages-tabs">
    <div class="ptab p1 on"><svg viewBox="0 0 10 18"><path class="ln" d="M1 7l4-5 4 5M1 11l4 5 4-5"/></svg>Pages</div>
    <div class="ptab p2">Layers</div>
    <div class="ptab p3">Links</div>
    <div class="pg-tools"><svg class="more2" viewBox="0 0 20 18"><path class="ln" d="M1 1l7 8-7 8M10 1l7 8-7 8"/></svg><i></i><svg class="phamb"><use href="#hamb"/></svg></div>
  </div>
  <div class="masters">
    <div class="master"><span>[None]</span><i class="mpage"></i></div>
    <div class="master"><span>A-Master</span><i class="mpage"></i><i class="mpage"></i></div>
    <svg class="chev m-up"><use href="#chev"/></svg>
    <svg class="chev m-dn"><use href="#chev"/></svg>
  </div>
  <div class="pages-body">
    <div class="spreads">
      <div class="pg-num one">1</div>
      <div class="spread">
        <div class="sheet"><b>A</b></div>
        <div class="sheet right"><b>A</b><svg viewBox="0 0 26 50"><path d="M0 1h18M0 4h24M0 7h10M0 10h16M0 13h14M0 16h20M0 19h18M0 22h22M0 25h24M0 28h16M0 31h20M0 34h18M0 37h24M0 40h22M0 43h16M0 46h16M0 49h14" stroke="#111" stroke-width="2"/></svg></div>
      </div>
      <div class="pg-num">2-3</div>
      <div class="spread">
        <div class="sheet"><b>A</b></div>
        <div class="sheet right"><b>A</b><svg viewBox="0 0 26 50"><path d="M0 1h14M0 4h22M0 7h18M0 10h22M0 13h24M0 16h16" stroke="#3a1c14" stroke-width="2"/></svg></div>
      </div>
      <div class="pg-num">4-5</div>
      <div class="spread">
        <div class="sheet"><b>A</b></div>
        <div class="sheet right hl"><b>A</b></div>
      </div>
      <div class="pg-num"><span>6-7</span></div>
    </div>
    <div class="pscroll"><svg class="chev up"><use href="#chev"/></svg><i class="pthumb"></i><svg class="chev dn"><use href="#chev"/></svg></div>
  </div>
  <div class="pages-foot">
    <span>7 Pages in 4 Spreads</span>
    <svg class="pf1" viewBox="0 0 37 26"><path d="M1 12h20v12H1zM14 12V3h14l6 6v14H22" fill="none" stroke="#c4c4c4" stroke-width="2"/></svg>
    <svg class="pf2" viewBox="0 0 20 20"><path class="ic" d="M0 0h20v20H8V8H0z"/></svg>
    <svg class="pf3" viewBox="0 0 20 24"><path d="M0 5h20M7 4V1h6v3M3 5v18h14V5M7 9v11M10 9v11M13 9v11" fill="none" stroke="#c4c4c4" stroke-width="2"/></svg>
  </div>
  <div class="panel-foot short"><i class="grip"></i></div>
</section>
</body>
</html>
```
FILE: styles.css
```css
* { box-sizing: border-box; }
html, body { margin: 0; padding: 0; }
body {
  width: 3360px; height: 2100px; overflow: hidden; position: relative;
  display: flex; flex-direction: column;
  background: #535353; color: #e4e4e4;
  font-family: "DejaVu Sans", sans-serif; font-size: 19px;
}
svg { display: block; flex: none; }
i { display: block; flex: none; }
p, ul { margin: 0; padding: 0; list-style: none; }
button { font: inherit; color: inherit; background: none; }
.defs { position: absolute; width: 0; height: 0; }
.ic { fill: #c4c4c4; }
.cut { fill: #535353; }
.ln { fill: none; stroke: #c8c8c8; stroke-width: 2; }
.dimln { stroke: #8a8a8a; }
.chev { width: 14px; height: 9px; }

/* menu bar */
.menubar {
  height: 46px; flex: none; display: flex; align-items: center; padding: 0 45px 2px 42px;
  background: linear-gradient(90deg, #c6d4df, #bccdd9 60%, #bfcfda); border-bottom: 2px solid #1e2a33;
  color: #0c1218; font-family: Inter, sans-serif; font-size: 26.500px;
}
.apple { width: 30px; height: 34px; fill: #0c1218; margin-right: 37px; margin-top: -4px; }
.app-name { font-weight: 700; width: 168px; white-space: nowrap; margin-right: 38px; font-size: 27.500px; }
.menus { display: flex; gap: 38.600px; }
.status { margin-left: auto; display: flex; align-items: center; }
.s-shield { width: 31px; height: 36px; margin-right: 28px; }
.s-cc { width: 38px; height: 36px; margin-right: 25px; }
.s-helmet { width: 37px; height: 36px; margin-right: 20px; }
.s-wifi { width: 41px; height: 36px; margin-right: 20px; }
.s-speaker { width: 26px; height: 26px; margin-right: 36px; }
.s-pct { width: 34px; margin-right: 10px; white-space: nowrap; }
.s-batt { width: 45px; height: 24px; margin-right: 31px; }
.s-flag { width: 33px; height: 22px; margin-right: 37px; }
.s-clock { width: 165px; margin-right: 33px; white-space: nowrap; }
.s-user { width: 101px; margin-right: 31px; }
.s-search { width: 29px; height: 36px; margin-right: 31px; }
.s-list { width: 37px; height: 20px; }

/* title bar */
.titlebar {
  height: 70px; flex: none; display: flex; align-items: center; padding: 0 31px 2px 21px;
  background: #535353; border-bottom: 2px solid #3b3b3b;
}
.lights { display: flex; gap: 18px; margin-right: 43px; }
.light { width: 22px; height: 22px; border-radius: 50%; background: #8e8e8e; position: relative; }
.light.on::after { content: ""; position: absolute; left: 8px; top: 8px; width: 6px; height: 6px; border-radius: 50%; background: #333; }
.badge { width: 32px; height: 32px; background: #c6c6c6; color: #5c5c5c; display: flex; align-items: center; justify-content: center; font-size: 19px; margin-right: 40px; margin-top: -2px; }
.badge + .zoom-val { margin-left: -4px; }
.zoom-val { width: 83px; font-size: 22px; color: #e2e2e2; white-space: nowrap; margin-right: 34px; }
.z-chev { margin-right: 27px; }
.tsep { width: 1px; height: 40px; background: #484848; margin-right: 19px; }
.t-view { width: 38px; height: 38px; margin-right: 15px; }
.c1 { margin-right: 31px; }
.t-screen { width: 33px; height: 38px; margin-right: 17px; }
.c2 { margin-right: 30px; }
.t-arrange { width: 34px; height: 33px; margin-right: 18px; }
.c3 { margin-right: 34px; }
.t-rocket { width: 36px; height: 36px; }
.app-title { margin-left: 707px; width: 292px; white-space: nowrap; font-size: 23.400px; color: #dedede; text-align: center; }
.title-right { margin-left: auto; display: flex; align-items: center; }
.publish { display: flex; align-items: center; gap: 14px; width: 242px; height: 50px; padding: 0 0 0 20px; border: 2.500px solid #ececec; border-radius: 25px; color: #ececec; font-size: 23px; white-space: nowrap; margin-right: 32px; }
.publish svg { width: 22px; height: 32px; }
.bulb { width: 25px; height: 38px; margin-right: 30px; }
.tsep.b, .tsep.c { background: #646464; width: 2px; margin-right: 25px; }
.tsep.c { margin-right: 12px; }
.workspace-name { width: 123px; white-space: nowrap; font-size: 21.500px; color: #dcdcdc; margin-right: 18px; }
.w-chev { margin-right: 33px; }
.stock { width: 258px; height: 40px; background: #454545; border: 2px solid #626262; border-radius: 5px; display: flex; align-items: center; gap: 14px; padding-left: 6px; color: #8a8a8a; font-size: 19px; white-space: nowrap; }
.stock svg { width: 32px; height: 26px; }

/* control bar */
.controlbar {
  height: 120px; flex: none; display: flex; padding: 12px 0 14px; background: #535353; border-bottom: 2px solid #3b3b3b; position: relative;
}
.group { flex: none; height: 94px; border-right: 1px solid #4c4c4c; }
.full { width: 100%; height: 100%; overflow: visible; }
.g-ref { width: 125px; display: flex; align-items: center; padding-left: 14px; border-right: 0; }
.vgrip { width: 3px; height: 40px; background: repeating-linear-gradient(#7a7a7a 0 2px, transparent 2px 5px); margin-right: 40px; }
.refpoint { width: 52px; height: 50px; }
.g-xy { width: 433px; display: grid; grid-template-columns: 33px 174px 52px 174px; grid-template-rows: 42px 42px; row-gap: 10px; border-right: 0; align-items: center; }
.lab { padding-left: 8px; font-size: 20px; color: #dcdcdc; }
.lab.w { padding-left: 26px; }
.cf { height: 42px; background: #5c5c5c; border-radius: 4px; display: flex; align-items: center; padding: 0 11px 0 9px; }
.spin { width: 14px; height: 34px; margin-right: 20px; }
.dim { color: #8f8f8f; font-size: 19.500px; white-space: nowrap; }
.push { margin-left: auto; }
.g-link { width: 68px; display: flex; align-items: center; justify-content: center; }
.g-link svg { width: 26px; height: 28px; }
.g-skew { width: 524px; display: grid; grid-template-columns: 54px 174px 66px 44px 174px; grid-template-rows: 42px 42px; row-gap: 10px; align-items: center; justify-items: center; }
.g-skew .cf { width: 100%; }
.mini.box { width: 27px; height: 28px; margin-left: 9px; }
.mini.small { width: 24px; height: 18px; grid-column: 4; }
.r1 { grid-row: 1; }
.r2 { grid-column: 1; grid-row: 2; }
.r3 { grid-row: 2; }
.c5 { grid-column: 5; grid-row: 1; }
.c7 { grid-column: 2; grid-row: 2; }
.c9 { grid-column: 5; grid-row: 2; }
.chain { grid-row: 1 / span 2; grid-column: 3; width: 44px; height: 44px; background: #2f2f2f; border-radius: 5px; display: flex; align-items: center; justify-content: center; margin-right: 10px; }
.chain svg { width: 14px; height: 30px; }
.g-rot { width: 193px; }
.p-glyph { font-family: "Liberation Serif", serif; font-size: 46px; fill: #7e7e7e; }
.g-sel { width: 125px; }
.g-swatch { width: 103px; display: grid; grid-template-columns: 40px 33px; grid-template-rows: 42px 42px; row-gap: 10px; column-gap: 7px; padding-left: 11px; }
.sw { width: 40px; height: 40px; }
.arrow-btn { border: 2px solid #6a6a6a; border-radius: 6px; background: #4c4c4c; display: flex; align-items: center; justify-content: center; }
.arrow-btn svg { width: 9px; height: 16px; }
.g-stroke { width: 195px; display: grid; grid-template-rows: 42px 42px; row-gap: 10px; padding: 0 10px 0 11px; }
.bf { height: 42px; display: flex; border: 2px solid #6c6c6c; border-radius: 6px; background: #535353; overflow: hidden; }
.spin-col { width: 34px; border-right: 1px solid #6c6c6c; display: flex; align-items: center; justify-content: center; }
.spin-col .spin { margin: 0; }
.val { flex: 1; align-self: center; padding-left: 10px; font-size: 20px; color: #e4e4e4; white-space: nowrap; }
.dd { width: 36px; margin-left: auto; border-left: 1px solid #6c6c6c; display: flex; align-items: center; justify-content: center; background: #535353; flex: none; align-self: stretch; }
.line-sw { width: 137px; background: #e3e3e3; display: flex; align-items: center; justify-content: center; }
.line-sw i { width: 108px; height: 15px; background: #000; }
.g-fx { width: 204px; display: grid; grid-template-rows: 42px 42px; row-gap: 10px; }
.fx-row { display: flex; align-items: center; padding-left: 22px; }
.fx-frame { width: 27px; height: 24px; margin-right: 30px; }
.fx-shadow { width: 26px; height: 28px; margin-right: 34px; }
.fx-text { font-family: "Liberation Serif", serif; font-style: italic; font-size: 34px; color: #c4c4c4; }
.op-row { display: flex; align-items: center; padding-left: 19px; gap: 15px; }
.op-ic { width: 20px; height: 22px; }
.bf.op { width: 138px; }
.bf.op .val { padding-left: 7px; }
.chevr-s { width: 9px; height: 16px; }
.g-wrap { width: 124px; }
.g-gap { width: 237px; display: grid; grid-template-columns: 54px 173px; grid-template-rows: 42px 42px; row-gap: 10px; align-items: center; }
.gap-ic { width: 28px; height: 28px; margin-left: 15px; }
.corner-sw { width: 137px; background: #e3e3e3; padding: 3px 0 0 4px; }
.corner-sw i { width: 106px; height: 32px; border-top: 3px solid #000; border-right: 2px solid #000; background: transparent; }
.g-style { width: 458px; display: grid; grid-template-columns: 84px 362px; grid-template-rows: 42px 42px; row-gap: 10px; align-items: center; }
.g-style .mini { width: 30px; height: 24px; margin-left: 29px; }
.style-field { background: #e3e3e3; color: #111; font-size: 19px; white-space: nowrap; padding-left: 14px; }
.style-field span { align-self: center; }
.style-mini { display: flex; gap: 20px; align-items: center; justify-content: flex-end; padding-right: 6px; }
.style-mini svg { width: 40px; height: 23px; }
.style-mini svg + svg { width: 34px; height: 20px; }
.bolt { width: 20px; height: 34px; margin: 30px 20px 0 auto; }
.g-end { width: 57px; border-right: 0; border-left: 1px solid #4c4c4c; display: flex; flex-direction: column; align-items: center; }
.gear { width: 20px; height: 20px; margin-top: 10px; }
.endmenu { width: 25px; height: 14px; margin-top: 36px; }

/* workspace */
.workspace { flex: 1; display: flex; min-height: 0; }
.doc { width: 3024px; flex: none; display: flex; flex-direction: column; }
.tabbar { height: 57px; flex: none; background: #424242; padding-left: 36px; border-bottom: 1px solid #3a3a3a; }
.doc-tab { width: 398px; height: 56px; background: #535353; display: flex; align-items: center; justify-content: flex-end; padding-right: 28px; white-space: nowrap; font-size: 20px; color: #e8e8e8; }
.hruler { background: #1e1e1e; flex: none; }
.rtext text { font-family: "DejaVu Sans", sans-serif; font-size: 20px; fill: #ececec; }
.rtext.vt text { fill: #b8b8b8; }
.stage { height: 1741px; flex: none; display: flex; }
.vruler { background: #1e1e1e; }
.page-left { width: 1066px; background: #fff; border-right: 1px solid #8d8d8d; flex: none; }
.page-right { width: 1442px; flex: none; background: #fff; padding: 388px 0 0 177px; border-right: 1px solid #8d8d8d; }
.pasteboard { width: 450px; flex: none; background: #b9b9b9; }
.vscroll { flex: 1; background: #474747; position: relative; }
.vthumb { position: absolute; left: 2px; top: 905px; width: 26px; height: 258px; background: #6a6a6a; border-radius: 12px; }
.vs-chev { position: absolute; left: 8px; bottom: 12px; }
.lyrics { font-family: "Liberation Serif", serif; font-size: 33px; color: #111; display: flex; flex-direction: column; gap: 43px; }
.line { display: flex; height: 44px; }
.line span { display: block; flex: none; padding-left: 5px; line-height: 47px; white-space: nowrap; }
.statusbar { height: 34px; flex: none; display: flex; align-items: center; background: #535353; }
.sb-first { width: 17px; height: 24px; margin: 0 28px 0 27px; }
.sb-prev { width: 10px; height: 24px; margin-right: 26px; }
.sb-field { width: 179px; height: 30px; border: 2px solid #6c6c6c; border-radius: 5px; background: #474747; display: flex; align-items: center; padding-left: 8px; margin-right: 28px; overflow: hidden; }
.sb-next { width: 10px; height: 24px; margin-right: 27px; }
.sb-last { width: 17px; height: 24px; margin-right: 34px; }
.sb-prof { width: 33px; height: 30px; margin-right: 31px; }
.sb-text { white-space: nowrap; font-size: 19px; color: #e0e0e0; }
.sb-text.prof { width: 207px; font-size: 18px; }
.sb-c1 { margin-right: 31px; }
.ok-dot { width: 22px; height: 22px; border-radius: 50%; background: #5ca050; margin-right: 10px; }
.err { width: 127px; }
.sb-c2 { margin-right: 4px; }
.hscroll { width: 2040px; height: 34px; background: #494949; position: relative; flex: none; }
.hs-left { position: absolute; left: 12px; top: 9px; width: 9px; height: 16px; }
.hthumb { position: absolute; left: 666px; top: 3px; width: 1016px; height: 27px; background: #6a6a6a; border-radius: 13px; }
.hs-right { position: absolute; left: 2028px; top: 9px; width: 9px; height: 16px; }
.spread-btn { display: flex; width: 40px; height: 34px; background: #494949; align-items: center; justify-content: center; margin-left: 10px; }
.spread-btn i { width: 14px; height: 20px; border: 2px solid #c8c8c8; }
.spread-btn i + i { border-left: 0; }
.resize { width: 20px; height: 16px; margin-left: 2px; }

/* dock */
.dock { flex: 1; border-left: 6px solid #3c3c3c; background: #535353; }
.dock-head { height: 23px; background: #424242; display: flex; justify-content: flex-end; align-items: center; padding-right: 12px; border-bottom: 2px solid #3b3b3b; }
.dock-head svg { width: 14px; height: 14px; }
.dock-group { padding: 21px 9px 3px 9px; border-bottom: 2px solid #3f3f3f; position: relative; }
.dock-group.first { padding-top: 20px; }
.dock-group .grip { position: absolute; left: 124px; top: 6px; }
.grip { width: 34px; height: 10px; background: repeating-linear-gradient(90deg, #2c2c2c 0 2px, transparent 2px 4px); display: block; }
.dock-item { height: 56px; display: flex; align-items: center; padding-left: 9px; font-size: 21.500px; color: #e8e8e8; border: 2px solid transparent; border-radius: 6px; white-space: nowrap; }
.dock-item svg { width: 38px; height: 36px; margin-right: 17px; }
.dock-item svg.tall { height: 48px; }
.dock-item.active { background: #383838; border-color: #5e5e5e; height: 48px; margin: 4px 0; }
.dock-a { font-family: "DejaVu Sans", sans-serif; font-weight: 700; font-size: 34px; fill: #c4c4c4; }
.dock-a.sm { font-size: 26px; font-weight: 400; }

/* tools */
.tools { position: absolute; left: 4px; top: 234px; width: 78px; height: 1254px; background: #535353; border-radius: 8px 8px 0 0; box-shadow: 1px 0 3px rgba(0,0,0,.5); }
.tools-head { height: 24px; background: #474747; display: flex; justify-content: space-between; align-items: center; padding: 0 14px 0 12px; border-bottom: 2px solid #3b3b3b; }
.tools-head svg { width: 12px; height: 10px; }
.tools-grip { width: 38px; height: 8px; margin: 7px auto 0; background: repeating-linear-gradient(90deg, #2c2c2c 0 2px, transparent 2px 5px); }
.tool-group { border-bottom: 1px solid #5e5e5e; padding: 2px 0 3px; }
.tool-group.first { margin-top: 16px; padding-top: 0; }
.tool { height: 48px; display: flex; align-items: center; justify-content: center; position: relative; }
.tool svg { width: 34px; height: 32px; }
.tool.active::before { content: ""; position: absolute; left: 10px; right: 10px; top: 2px; bottom: 2px; background: #2f2f2f; border-radius: 4px; }
.tool.active svg { position: relative; }
.tool.more::after { content: ""; position: absolute; right: 12px; bottom: 2px; border-style: solid; border-width: 0 0 6px 7px; border-color: transparent transparent #c4c4c4 transparent; }
.sw-svg { margin-left: -4px; }
.fmt-row { display: flex; align-items: center; gap: 10px; padding-left: 10px; }
.fmt-btn { width: 28px; height: 24px; background: #2f2f2f; border-radius: 4px; display: flex; align-items: center; justify-content: center; }
.fmt-btn i { width: 16px; height: 12px; border: 2px solid #c4c4c4; }
.fmt-row svg { width: 16px; height: 14px; }
.apply-btn { width: 56px; height: 44px; margin: 12px 0 0 10px; background: #2f2f2f; border-radius: 5px; display: flex; align-items: center; justify-content: center; position: relative; }
.apply-btn + .apply-btn { margin-top: 14px; }
.apply-btn svg { width: 32px; height: 27px; }
.apply-btn::after { content: ""; position: absolute; right: 2px; bottom: 2px; border-style: solid; border-width: 0 0 6px 7px; border-color: transparent transparent #c4c4c4 transparent; }

/* floating panels */
.scripts { position: absolute; left: 298px; top: 498px; width: 572px; height: 1161px; background: #535353; border: 3px solid #3c3c3c; border-top: 0; border-radius: 8px 8px 0 0; box-shadow: 0 6px 14px rgba(0,0,0,.28); display: flex; flex-direction: column; font-size: 20px; }
.panel-strip { height: 29px; flex: none; background: #424242; border-top: 1px solid #3c3c3c; display: flex; justify-content: space-between; align-items: center; padding: 0 8px; border-bottom: 2px solid #393939; border-radius: 8px 8px 0 0; }
.panel-strip svg { width: 12px; height: 12px; }
.panel-tabs { height: 54px; flex: none; background: #424242; display: flex; border-bottom: 2px solid #3b3b3b; position: relative; }
.ptab { display: flex; align-items: center; font-weight: 700; font-size: 19.500px; color: #9a9a9a; border-right: 2px solid #393939; white-space: nowrap; height: 100%; padding-top: 3px; }
.ptab.on { background: #535353; color: #e8e8e8; height: calc(100% + 2px); }
.ptab.on svg { width: 10px; height: 18px; margin-right: 12px; }
.t1 { width: 178px; padding-left: 23px; }
.t2 { width: 177px; padding-left: 26px; }
.t3 { width: 134px; padding-left: 13px; }
.phamb { position: absolute; right: 11px; top: 21px; width: 20px; height: 15px; }
.listwrap { height: 1012px; flex: none; display: flex; }
.list { width: 541px; flex: none; }
.list li { height: 44px; display: flex; align-items: center; border-bottom: 1px solid #5f5f5f; white-space: nowrap; color: #ececec; padding-top: 2px; }
.list li.dimrow { color: #8e8e8e; }
.twist { width: 132px; flex: none; padding-left: 16px; display: flex; align-items: center; }
.list .chev-r { width: 9px; height: 16px; margin-left: 7px; }
.ico { width: 28px; height: 26px; margin-right: 13px; }
.ico.inf { width: 24px; height: 24px; margin-right: 17px; }
.l2 .ico { margin-left: 43px; }
.l3 .ico { margin-left: 85px; }
.list li.sel { background: #526880; border-bottom-color: #526880; }
.lscroll { flex: 1; background: #474747; position: relative; border-right: 3px solid #5a5a5a; }
.lscroll .up { transform: rotate(180deg); position: absolute; left: 4px; top: 10px; }
.lscroll .dn { position: absolute; left: 4px; bottom: 8px; }
.lthumb { position: absolute; left: 3px; top: 254px; width: 19px; height: 412px; background: #6a6a6a; border-radius: 10px; }
.panel-foot { margin-top: auto; height: 16px; border-top: 3px solid #3b3b3b; display: flex; justify-content: center; align-items: center; }
.panel-foot .grip { width: 34px; height: 9px; }

.pages { position: absolute; left: 2545px; top: 252px; width: 481px; height: 846px; background: #535353; border-top: 10px solid #3a3a3a; border-bottom: 2px solid #3b3b3b; display: flex; flex-direction: column; font-size: 18px; }
.pages-tabs { height: 53px; flex: none; background: #424242; display: flex; border-bottom: 2px solid #3b3b3b; position: relative; }
.p1 { width: 126px; padding-left: 16px; }
.p2 { width: 106px; padding-left: 22px; }
.p3 { width: 106px; padding-left: 22px; }
.pg-tools { position: absolute; left: 400px; top: 18px; display: flex; align-items: center; }
.more2 { width: 20px; height: 18px; margin-right: 14px; }
.pg-tools i { width: 2px; height: 20px; background: #888; }
.pg-tools .phamb { position: absolute; left: 48px; top: 2px; width: 20px; height: 15px; }
.masters { height: 270px; flex: none; position: relative; padding: 10px 44px 0 7px; border-bottom: 4px solid #5e5e5e; color: #f0f0f0; }
.master { display: flex; height: 57px; align-items: flex-start; font-size: 19.500px; line-height: 36px; }
.master span { margin-right: auto; }
.mpage { width: 32px; height: 46px; background: #fff; }
.mpage + .mpage { border-left: 1px solid #999; }
.m-up, .m-dn { position: absolute; right: 8px; opacity: .18; }
.m-up { top: 16px; transform: rotate(180deg); }
.m-dn { bottom: 8px; }
.pages-body { height: 445px; flex: none; display: flex; }
.spreads { width: 455px; flex: none; padding: 12px 0 0 182px; color: #ececec; }
.pg-num { height: 48px; margin-bottom: 9px; padding-top: 10px; width: 88px; text-align: center; font-size: 20px; line-height: 28px; }
.pg-num.one { height: 28px; margin: 0 0 19px 0; padding: 0 0 0 40px; }
.pg-num span { display: inline-block; width: 48px; background: #2d8ceb; color: #fff; font-weight: 700; }
.spread { width: 92px; height: 71px; display: flex; position: relative; background: #fff; border: 1px solid #999; }
.spread::before { content: ""; position: absolute; left: 44px; top: -22px; bottom: -20px; width: 2px; background: #c4c4c4; z-index: 1; }
.sheet { flex: 1; position: relative; color: #000; }
.sheet b { font-family: "Liberation Sans", sans-serif; font-weight: 400; font-size: 20px; line-height: 20px; position: absolute; left: 2px; top: 1px; }
.sheet.right b { left: auto; right: 1px; }
.sheet svg { position: absolute; left: 5px; top: 10px; width: 26px; height: 50px; }
.sheet.hl { background: #94c1f3; }
.sheet.hl b { background: #fff; }
.pscroll { flex: 1; background: #474747; position: relative; }
.pscroll .up { transform: rotate(180deg); position: absolute; left: 6px; top: 12px; }
.pscroll .dn { position: absolute; left: 6px; bottom: 8px; }
.pthumb { position: absolute; left: 2px; top: 96px; width: 22px; height: 320px; background: #6a6a6a; border-radius: 11px; }
.pages-foot { height: 51px; flex: none; display: flex; align-items: center; padding-left: 12px; border-top: 2px solid #5c5c5c; color: #e4e4e4; font-size: 19.300px; white-space: nowrap; }
.pages-foot span { width: 281px; }
.pf1 { width: 37px; height: 26px; margin-right: 27px; }
.pf2 { width: 20px; height: 20px; margin-right: 35px; }
.pf3 { width: 20px; height: 24px; }
.panel-foot.short { height: 15px; border-top-width: 4px; background: #484848; }
```
